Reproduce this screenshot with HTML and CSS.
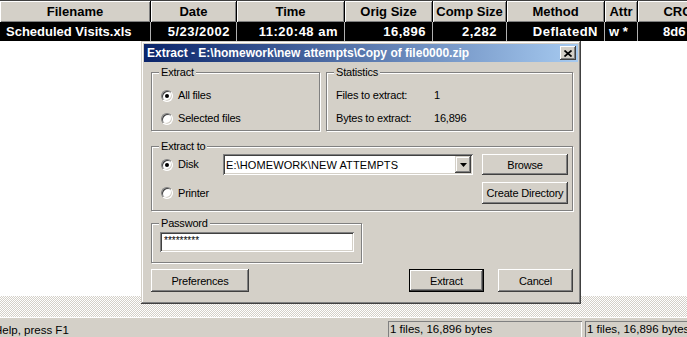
FILE: index.html
```html
<!DOCTYPE html>
<html>
	<head>
		<meta charset="utf-8" />
		<title>Extract</title>
		<link rel="stylesheet" href="styles.css">
	</head>
	<body>
		<div class="list">
			<div class="row head">
				<div class="cell">Filename</div>
				<div class="cell">Date</div>
				<div class="cell">Time</div>
				<div class="cell">Orig Size</div>
				<div class="cell">Comp Size</div>
				<div class="cell">Method</div>
				<div class="cell">Attr</div>
				<div class="cell">CRC</div>
			</div>
			<div class="row data">
				<div class="cell name">Scheduled Visits.xls</div>
				<div class="cell num">5/23/2002</div>
				<div class="cell num">11:20:48 am</div>
				<div class="cell num">16,896</div>
				<div class="cell num comp">2,282</div>
				<div class="cell num">DeflatedN</div>
				<div class="cell attr">w *</div>
				<div class="cell crc">8d6</div>
			</div>
		</div>
		<div class="blank"></div>
		<div class="splitter"></div>
		<div class="statusbar">
			<div class="status-help">Help, press F1</div>
			<div class="panel p1">1 files, 16,896 bytes</div>
			<div class="panel p2">1 files, 16,896 bytes</div>
		</div>

		<div class="dialog">
			<div class="titlebar">
				<span class="title">Extract - E:\homework\new attempts\Copy of file0000.zip</span>
				<span class="close">
					<svg width="8" height="7" viewBox="0 0 8 7"><path d="M0.5 0.5L7.5 6.5M7.5 0.5L0.5 6.5" stroke="#000" stroke-width="1.7"/></svg>
				</span>
			</div>
			<div class="dialog-body">
				<div class="top-row">
					<div class="group g-extract">
						<div class="group-title">Extract</div>
						<div class="options">
							<div class="opt"><span class="radio on"></span>All files</div>
							<div class="opt"><span class="radio"></span>Selected files</div>
						</div>
					</div>
					<div class="group g-stats">
						<div class="group-title">Statistics</div>
						<div class="stats">
							<span>Files to extract:</span><span>1</span>
							<span>Bytes to extract:</span><span>16,896</span>
						</div>
					</div>
				</div>

				<div class="group g-to">
					<div class="group-title">Extract to</div>
					<div class="to-grid">
						<div class="opt"><span class="radio on"></span>Disk</div>
						<div class="combo">
							<span class="combo-text">E:\HOMEWORK\NEW ATTEMPTS</span>
							<span class="combo-btn">
								<svg width="7" height="4" viewBox="0 0 7 4"><path d="M0 0h7L3.5 4z" fill="#000"/></svg>
							</span>
						</div>
						<div class="btn">Browse</div>
						<div class="opt"><span class="radio"></span>Printer</div>
						<div></div>
						<div class="btn">Create Directory</div>
					</div>
				</div>

				<div class="group g-pass">
					<div class="group-title">Password</div>
					<div class="field"><span class="stars">*********</span></div>
				</div>

				<div class="buttons">
					<div class="btn pref">Preferences</div>
					<div class="spacer"></div>
					<div class="btn default">Extract</div>
					<div class="btn">Cancel</div>
				</div>
			</div>
		</div>
	</body>
</html>
```

FILE: styles.css
```css
/* classic windows grey */
body{
	margin: 0;
	width: 687px;
	height: 337px;
	overflow: hidden;
	display: flex;
	flex-direction: column;
	background: #fff;
	font-family: "Liberation Sans", Arial, sans-serif;
	position: relative;
}

/* file list */
.row{
	display: grid;
	grid-template-columns: 151px 86px 108px 88px 74px 98px 33px 80px;
	width: 718px;
}
.head{
	height: 22px;
	border-top: 1px solid #404040;
	box-sizing: border-box;
	background: #d4d0c8;
}
.head .cell{
	font-size: 13px;
	font-weight: bold;
	line-height: 21px;
	text-align: center;
	border-right: 1px solid #000;
	box-shadow: inset 1px 1px #fff, inset -1px -1px #808080;
	white-space: nowrap;
	overflow: hidden;
}
.data{
	height: 19px;
	background: #000;
	color: #fff;
}
.data .cell{
	font-size: 13px;
	font-weight: bold;
	line-height: 19px;
	border-right: 1px solid #b0b0b0;
	white-space: nowrap;
	overflow: hidden;
}
.data .name{ padding-left: 6px; }
.data .num{
	text-align: right;
	padding-right: 6px;
	letter-spacing: 0.5px;
}
.data .comp{ padding-right: 9px; }
.data .attr{ padding-left: 4px; }
.data .crc{ padding-left: 25px; border-right: 0; }

.blank{ flex: 1; }
.splitter{
	height: 21px;
	background: repeating-conic-gradient(#d4d0c8 0 25%, #fff 0 50%) 0 0 / 2px 2px;
}
.statusbar{
	height: 20px;
	box-sizing: border-box;
	border-top: 1px solid #fff;
	background: #d4d0c8;
	display: flex;
	padding-top: 3px;
	font-size: 11.5px;
}
.statusbar > div{ flex-shrink: 0; }
.status-help{
	width: 394px;
	margin-left: -6px;
	line-height: 16px;
	padding-top: 1px;
}
.panel{
	height: 17px;
	line-height: 17px;
	padding-left: 2px;
	box-sizing: border-box;
	box-shadow: inset 1px 1px #808080, inset -1px -1px #fff;
	white-space: nowrap;
}
.p1{ width: 194px; margin-right: 3px; }
.p2{ width: 110px; }

/* dialog window */
.dialog{
	position: absolute;
	left: 141px;
	top: 41px;
	width: 440px;
	height: 263px;
	box-sizing: border-box;
	padding: 3px;
	background: #d4d0c8;
	box-shadow: inset -1px -1px #404040, inset 1px 1px #d4d0c8, inset -2px -2px #808080, inset 2px 2px #fff;
	font-size: 11px;
	letter-spacing: -0.2px;
}
.titlebar{
	height: 18px;
	display: flex;
	align-items: center;
	padding: 0 2px 0 3px;
	background: linear-gradient(to right, #0a246a, #a6caf0);
}
.title{
	flex: 1;
	color: #fff;
	font-size: 12px;
	font-weight: bold;
	letter-spacing: 0;
	white-space: nowrap;
}
.close{
	width: 16px;
	height: 14px;
	display: flex;
	align-items: center;
	justify-content: center;
	background: #d4d0c8;
	box-shadow: inset -1px -1px #404040, inset 1px 1px #fff, inset -2px -2px #808080;
}

.dialog-body{
	padding: 10px 5px 0 7px;
}
.top-row{
	display: flex;
	gap: 6px;
}
.group{
	border: 1px solid #808080;
	box-shadow: 1px 1px 0 #fff, inset 1px 1px 0 #fff;
	box-sizing: border-box;
}
.group-title{
	width: fit-content;
	margin: -7px 0 0 7px;
	padding: 0 2px;
	line-height: 13px;
	background: #d4d0c8;
}
.g-extract{ width: 169px; height: 59px; }
.g-stats{ flex: 1; height: 59px; }
.options{
	display: flex;
	flex-direction: column;
	gap: 10px;
	margin-top: 10px;
}
.opt{
	display: flex;
	align-items: center;
	gap: 5px;
	padding-left: 9px;
	line-height: 13px;
}
.radio{
	width: 12px;
	height: 12px;
	box-sizing: border-box;
	border-radius: 50%;
	background: #fff;
	border: 1px solid;
	border-color: #808080 #fff #fff #808080;
	box-shadow: inset 1px 1px #404040, inset -1px -1px #d4d0c8;
	display: flex;
	align-items: center;
	justify-content: center;
}
.radio.on::after{
	content: '';
	width: 4px;
	height: 4px;
	border-radius: 50%;
	background: #000;
}
.stats{
	display: grid;
	grid-template-columns: 98px auto;
	row-gap: 10px;
	margin-top: 10px;
	padding-left: 9px;
	line-height: 13px;
}

.g-to{
	margin-top: 15px;
	height: 65px;
}
.to-grid{
	display: grid;
	grid-template-columns: 62px 250px 86px;
	grid-template-rows: 21px 22px;
	column-gap: 9px;
	row-gap: 7px;
	margin-top: 1px;
}
.combo, .field{
	background: #fff;
	box-shadow: inset 1px 1px #808080, inset -1px -1px #fff, inset 2px 2px #404040, inset -2px -2px #d4d0c8;
	display: flex;
	align-items: center;
	padding: 2px;
	box-sizing: border-box;
}
.combo-text{
	flex: 1;
	padding-left: 1px;
	letter-spacing: 0.1px;
}
.combo-btn{
	width: 16px;
	height: 17px;
	display: flex;
	align-items: center;
	justify-content: center;
	background: #d4d0c8;
	box-shadow: inset -1px -1px #404040, inset 1px 1px #d4d0c8, inset -2px -2px #808080, inset 2px 2px #fff;
}
.btn{
	display: flex;
	align-items: center;
	justify-content: center;
	background: #d4d0c8;
	box-shadow: inset -1px -1px #404040, inset 1px 1px #fff, inset -2px -2px #808080, inset 2px 2px #d4d0c8;
	box-sizing: border-box;
	white-space: nowrap;
}

.g-pass{
	margin-top: 12px;
	width: 211px;
	height: 40px;
}
.field{
	width: 194px;
	height: 20px;
	margin: 2px 0 0 8px;
	align-items: flex-start;
}
.stars{
	padding: 1px 0 0 2px;
	font-size: 10px;
	letter-spacing: 0;
}

.buttons{
	display: flex;
	gap: 14px;
	margin-top: 6px;
	height: 23px;
}
.buttons .btn{ width: 75px; }
.buttons .pref{ width: 98px; }
.spacer{ flex: 1; }
.btn.default{ border: 1px solid #000; }
```
